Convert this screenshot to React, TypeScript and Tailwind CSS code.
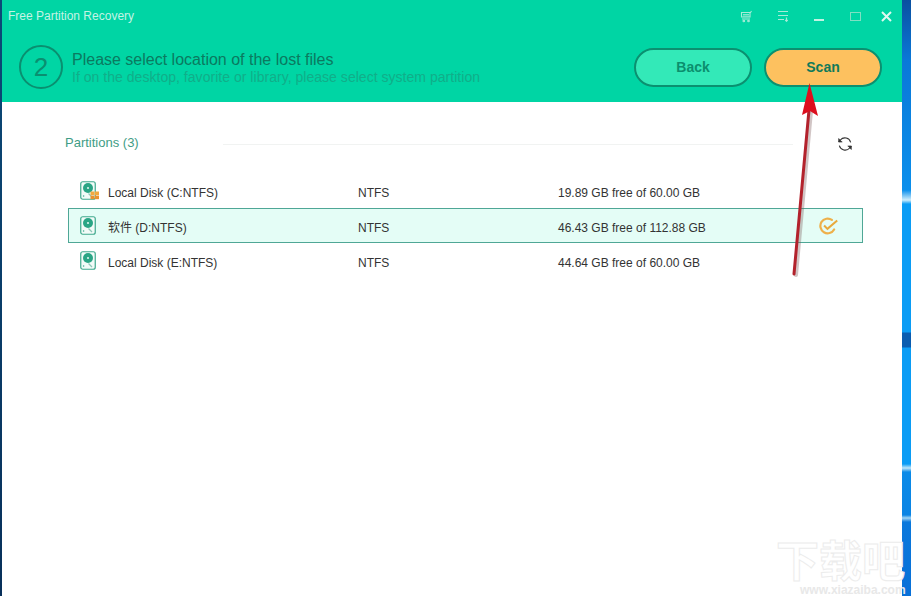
const sans = 'font-["Liberation_Sans","Noto_Sans_CJK_SC",sans-serif]'

const PARTITIONS = [
  { name: 'Local Disk (C:NTFS)', fs: 'NTFS', free: '19.89 GB free of 60.00 GB', windows: true, selected: false },
  { name: '软件 (D:NTFS)', fs: 'NTFS', free: '46.43 GB free of 112.88 GB', windows: false, selected: true },
  { name: 'Local Disk (E:NTFS)', fs: 'NTFS', free: '44.64 GB free of 60.00 GB', windows: false, selected: false },
]

function DiskIcon({ windows }: { windows: boolean }) {
  return (
    <svg width="20" height="20" viewBox="0 0 20 20" fill="none">
      <rect x="0.75" y="0.75" width="14.5" height="17.5" rx="2" fill="#f2fbf8" stroke="#3fa98d" strokeWidth="1.2" />
      <circle cx="8" cy="7" r="5" fill="#2aa585" />
      <circle cx="8" cy="7" r="1.1" fill="#d8f3ea" />
      <path d="M8.5 12.5l3.5 3.5" stroke="#8cc7b7" strokeWidth="1.2" />
      <circle cx="3.6" cy="15" r="0.8" fill="#3fa98d" />
      {windows && (
        <g>
          <rect x="10.5" y="10.5" width="4" height="3.6" fill="#f2a93f" />
          <rect x="15" y="10.5" width="4" height="3.6" fill="#f2a93f" />
          <rect x="10.5" y="14.6" width="4" height="3.6" fill="#ea922d" />
          <rect x="15" y="14.6" width="4" height="3.6" fill="#ea922d" />
        </g>
      )}
    </svg>
  )
}

function CheckBadge() {
  return (
    <svg width="20" height="19" viewBox="0 0 18 17" fill="none">
      <path d="M13.6 11.2A6.6 6.6 0 1 1 11.6 2.6" stroke="#eeb04a" strokeWidth="2" strokeLinecap="round" />
      <path d="M4.6 7.6l3 3L16.4 3" stroke="#e8a93c" strokeWidth="1.8" />
    </svg>
  )
}

function TitleIcons() {
  return (
    <div className="flex items-center pt-[2px]">
      <svg className="ml-[738px]" width="13" height="13" viewBox="0 0 13 13" fill="none" stroke="#a9ecd8" strokeWidth="1.1">
        <path d="M1 2.5h9.5l1-1.5M1.5 2.5v4.5h8.5v-4.5M2 9h8" />
        <path d="M3 4.5h6M3 6h6" strokeWidth="0.8" />
        <circle cx="3.8" cy="11" r="0.8" />
        <circle cx="8.5" cy="11" r="0.8" />
      </svg>
      <svg className="ml-[24px]" width="12" height="12" viewBox="0 0 12 12" fill="none" stroke="#a9ecd8" strokeWidth="1.2">
        <path d="M1 1.5h10M1 5.5h10M1 9.5h6M9.5 7.5v3.5M8.3 10l1.2 1.2 1.2-1.2" />
      </svg>
      <div className="ml-[25px] mt-[7px] h-[2px] w-[10px] bg-[#c2f2e3]" />
      <div className="ml-[26px] h-[9px] w-[11px] border border-[#7fe0c3]" />
      <svg className="ml-[20px]" width="11" height="11" viewBox="0 0 11 11" stroke="#dff8f0" strokeWidth="2">
        <path d="M1 1l9 9M10 1l-9 9" />
      </svg>
    </div>
  )
}

export default function App() {
  return (
    <div className={`relative flex h-[596px] w-[911px] overflow-hidden bg-[#0a78d6] ${sans}`}>
      <div className="w-[2px] bg-gradient-to-b from-[#0b4a78] to-[#08305a]" />

      <main className="flex w-[900px] flex-col bg-white">
        <header className="relative h-[102px] bg-[#00d5a4]">
          <div className="flex h-[30px] items-center">
            <span className="absolute left-[6px] top-[7px] text-[12px] text-[#c4f3e4]">Free Partition Recovery</span>
            <TitleIcons />
          </div>
          <div className="mt-[15px] flex items-center pr-[20px]">
            <div className="ml-[17px] flex h-[44px] w-[44px] items-center justify-center rounded-full border-2 border-[#0a8f70] text-[26px] text-[#0a8f70]">
              2
            </div>
            <div className="ml-[9px] flex-1">
              <div className="text-[16px] leading-[19px] text-[#0b7a60]">Please select location of the lost files</div>
              <div className="text-[14px] leading-[16px] tracking-[0.03px] text-[#10ae89]">If on the desktop, favorite or library, please select system partition</div>
            </div>
            <button className="h-[39px] w-[118px] rounded-full border-2 border-[#0b9070] bg-[#33e9b8] text-[14px] font-bold text-[#0b8f6e]">
              Back
            </button>
            <button className="ml-[12px] h-[39px] w-[118px] rounded-full border-2 border-[#0b9070] bg-[#fdc15f] text-[14px] font-bold text-[#0f7a5a]">
              Scan
            </button>
          </div>
        </header>

        <section className="flex-1 pl-[63px] pr-[39px] pt-[32px]">
          <div className="flex h-[20px] items-center">
            <span className="mb-[3px] w-[158px] text-[13px] text-[#3f9d86]">Partitions (3)</span>
            <div className="h-px w-[570px] bg-[#f1f3f2]" />
            <svg className="ml-[44px]" width="16" height="16" viewBox="0 0 24 24" fill="none" stroke="#333" strokeWidth="1.6">
              <path d="M20.5 9.5A9 9 0 0 0 5 6l-2.5 3M3.5 14.5A9 9 0 0 0 19 18l2.5-3" />
              <path d="M2.5 3.5V9H8M21.5 20.5V15H16" fill="#333" strokeWidth="1" />
            </svg>
          </div>

          <div className="ml-[3px] mt-[19px] w-[795px]">
            {PARTITIONS.map((p) => (
              <div
                key={p.name}
                className={`flex h-[35px] items-center border pt-[5px] text-[12px] text-[#333] ${
                  p.selected ? 'border-[#4fa796] bg-[#e4fdf6]' : 'border-transparent'
                }`}
              >
                <div className="ml-[11px] mb-[5px] w-[28px]">
                  <DiskIcon windows={p.windows} />
                </div>
                <span className="w-[250px]">{p.name}</span>
                <span className="w-[200px]">{p.fs}</span>
                <span className="w-[261px]">{p.free}</span>
                {p.selected && (
                  <div className="mb-[3px]">
                    <CheckBadge />
                  </div>
                )}
              </div>
            ))}
          </div>
        </section>
      </main>

      <div className="w-[9px] bg-[linear-gradient(to_bottom,#0a4fa0_0px,#0a78d8_60px,#0a8fec_190px,#cfeefc_200px,#0a9cf5_204px,#0a9cf5_332px,#0a5cb0_333px,#0a5cb0_347px,#0a9cf5_348px,#0a9cf5_464px,#bfe6fa_468px,#0a8ae8_472px,#0a84e4_515px,#9fd4f5_518px,#0a78dc_522px,#0870d8_596px)]" />

      {/* annotation arrow */}
      <svg className="absolute left-[780px] top-[80px]" width="50" height="200" viewBox="0 0 50 200" fill="none">
        <path d="M14 194L29 30" stroke="#7a5a5a" strokeOpacity="0.35" strokeWidth="4" strokeLinecap="round" transform="translate(2 1)" />
        <path d="M14 194L29 30" stroke="#b3222c" strokeWidth="3" strokeLinecap="round" />
        <path d="M29.5 3L22 35L30 31L38 36Z" fill="#dc0f1e" />
      </svg>

      {/* site watermark */}
      <div className="absolute left-[776px] top-[539px] w-[135px] text-white">
        <div className="text-[43px] font-bold leading-[46px] whitespace-nowrap [-webkit-text-stroke:1px_#ececec]">下载吧</div>
        <div className="ml-[24px] text-[12px] font-bold leading-[11px] text-[#e8e8e8] whitespace-nowrap">www.xiazaiba.com</div>
      </div>
    </div>
  )
}
